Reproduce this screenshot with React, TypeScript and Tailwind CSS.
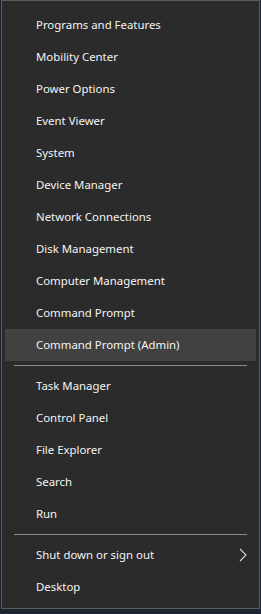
const groupA = [
  'Programs and Features',
  'Mobility Center',
  'Power Options',
  'Event Viewer',
  'System',
  'Device Manager',
  'Network Connections',
  'Disk Management',
  'Computer Management',
  'Command Prompt',
  'Command Prompt (Admin)',
];

const groupB = ['Task Manager', 'Control Panel', 'File Explorer', 'Search', 'Run'];

function Item({ label, active, arrow }: { label: string; active?: boolean; arrow?: boolean }) {
  return (
    <div
      className={`mx-[3px] h-8 flex items-center justify-between pl-[31px] pr-[9px] ${
        active ? 'bg-[#414141]' : ''
      }`}
    >
      <span>{label}</span>
      {arrow && (
        <svg width="8" height="14" viewBox="0 0 8 14" fill="none">
          <path d="M1 1l6 6-6 6" stroke="#d8d8d8" strokeWidth="1.1" />
        </svg>
      )}
    </div>
  );
}

function Separator() {
  return (
    <div className="h-[9px] flex items-center px-3">
      <div className="h-px w-full bg-[#8a8a8a]" />
    </div>
  );
}

export default function App() {
  return (
    <div className="w-[261px] h-[614px] bg-[#1a2433] overflow-hidden">
      <div
        className="ml-px w-[259px] h-[609px] bg-[#2b2b2b] border border-[#5c5c5c] text-[#f4f4f4] text-[11.4px] pt-[8px]"
        style={{ fontFamily: '"Noto Sans", "Open Sans", sans-serif' }}
      >
        {groupA.map((l) => (
          <Item key={l} label={l} active={l === 'Command Prompt (Admin)'} />
        ))}
        <Separator />
        {groupB.map((l) => (
          <Item key={l} label={l} />
        ))}
        <Separator />
        <Item label="Shut down or sign out" arrow />
        <Item label="Desktop" />
      </div>
    </div>
  );
}
